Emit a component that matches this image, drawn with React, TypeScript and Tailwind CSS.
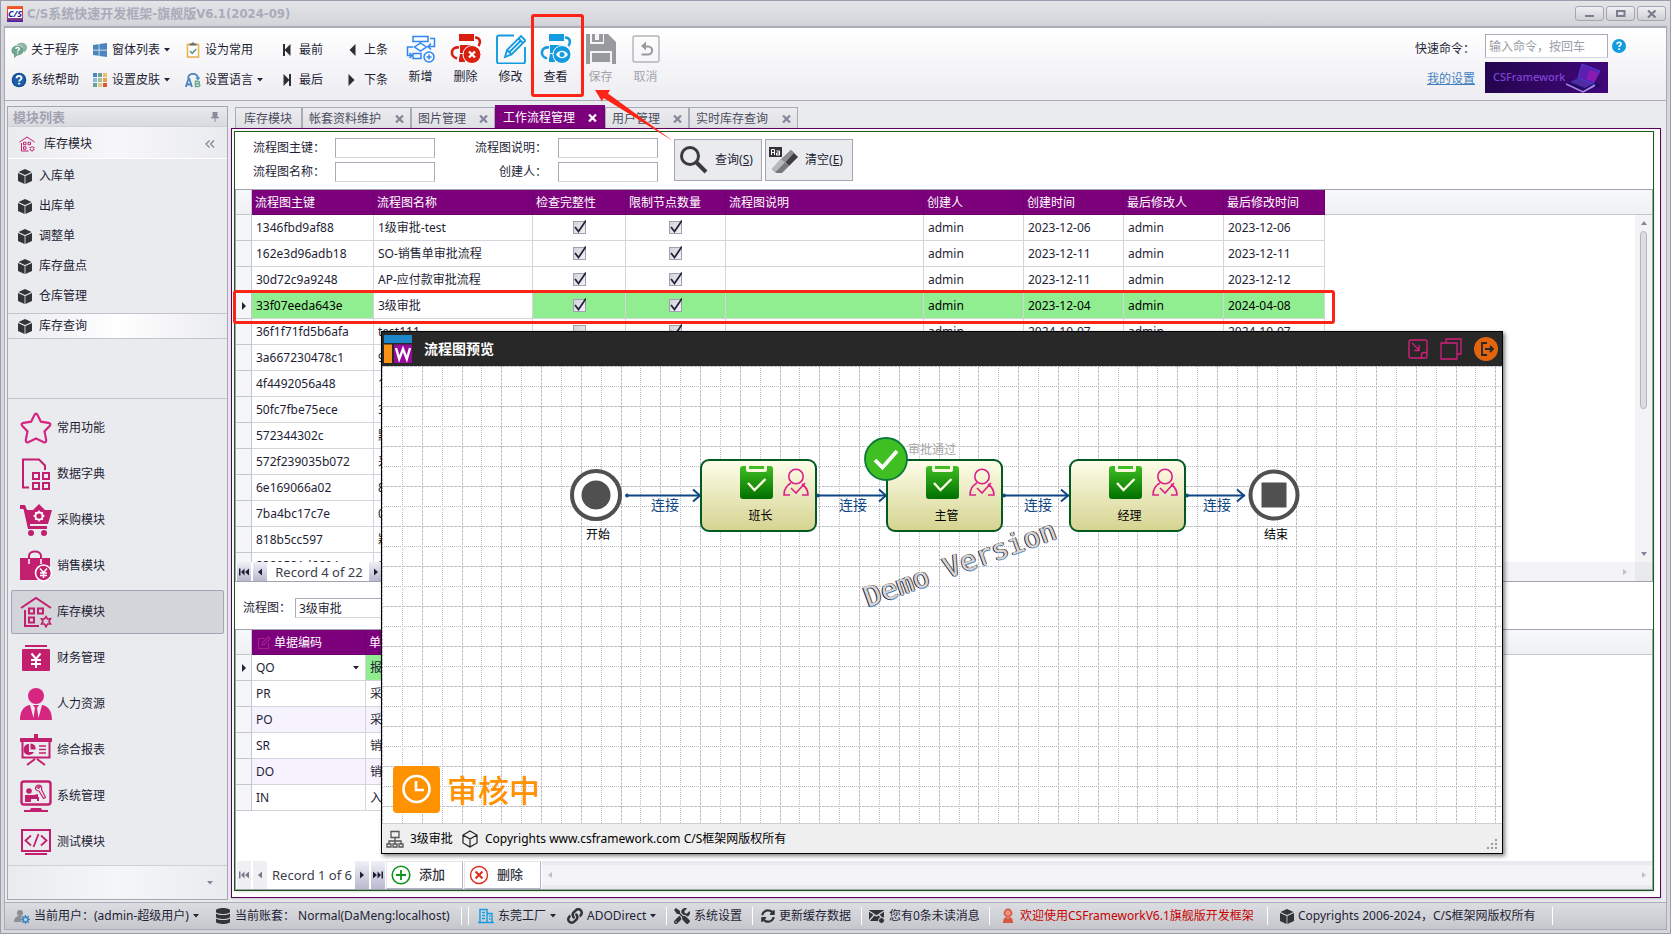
import type { ReactNode } from 'react';
import { FaWindows, FaDatabase, FaLink, FaTools, FaSyncAlt } from 'react-icons/fa';

type SvgProps = { box?: string; cls?: string; children: ReactNode };
const Svg = ({ box = '0 0 16 16', cls = 'size-4', children }: SvgProps) => (
  <svg viewBox={box} className={`shrink-0 ${cls}`} fill="none" aria-hidden="true">
    {children}
  </svg>
);

const Caret = () => (
  <Svg box="0 0 6 4" cls="h-1 w-1.5">
    <path d="M0 0h6L3 3.5z" fill="#23233a" />
  </Svg>
);

/* ---------- ribbon icons ---------- */
const AboutIcon = () => (
  <Svg>
    <path d="M6 3C8-.5 16 0 16 5.500c0 3-2 4-3 5l-1-2C13 4 9 2.500 6 3z" fill="#8cb5a2" />
    <path d="M6.500 3.500c3.500 0 6 2 6 5s-3 5-6 4.800L3 16v-3.500C1.500 11.800.5 10.500.5 8.500c0-3 2.500-5 6-5z" fill="#6fa38c" />
    <path d="M4.800 7c0-2 3.600-2 3.500 0 0 1.300-1.700 1.200-1.700 2.600M6.600 10.600v1.200" stroke="#fff" strokeWidth="1.400" />
  </Svg>
);
const HelpIcon = () => (
  <Svg>
    <circle cx="8" cy="8" r="7.300" fill="#0f4d93" />
    <circle cx="8" cy="8" r="6" fill="#1d5faa" />
    <path d="M5.600 6.300c0-3.300 5-3.100 4.900-.3 0 1.800-2.300 1.600-2.300 3.600M8.200 10.800v1.800" stroke="#fff" strokeWidth="1.900" />
  </Svg>
);
const PaletteIcon = () => (
  <Svg>
    {['#4a86bd', '#6d9e9c', '#efbf6c', '#8cbcd8', '#9cc39b', '#eba04f', '#6d9e9c', '#d6cf85', '#d9573a'].map((c, i) => (
      <rect key={i} x={1 + (i % 3) * 5} y={1 + Math.floor(i / 3) * 5} width="4" height="4" fill={c} />
    ))}
  </Svg>
);
const ClipIcon = () => (
  <Svg>
    <rect x="2.500" y="2.500" width="11" height="12.500" fill="#fff" stroke="#e9b451" strokeWidth="1.600" />
    <path d="M4.500 3.500v-2h2l.8-1h1.400l.8 1h2v2z" fill="#6d6d6d" />
    <path d="M5 9l2.200 2.300L11.200 7" stroke="#5d9c86" strokeWidth="1.800" />
  </Svg>
);
const LanguageIcon = () => (
  <Svg>
    <path d="M3 6c1-5.500 9-5.500 10 0" stroke="#4a86bd" strokeWidth="1.800" />
    <path d="M10.300 5.500h5L13 8.500z" fill="#4a86bd" />
    <path d="M.8 15l2.600-8h1l2.600 8M2 12.500h4" stroke="#4a86bd" strokeWidth="1.800" />
    <path d="M10.500 9.200h2.300c2 0 2 2.500 0 2.600h-2.300 2.700c2 0 2 2.700 0 2.700h-2.700z" stroke="#6fa88f" strokeWidth="1.600" />
  </Svg>
);
const StepIcon = ({ bar, next }: { bar?: boolean; next?: boolean }) => (
  <Svg box="0 0 8 12" cls={`h-3 w-2 ${next ? 'rotate-180' : ''}`}>
    {bar && <path d="M0 0h2v12H0z" fill="#2d2d33" />}
    <path d="M7.500 0v12L1.500 6z" fill="#2d2d33" />
  </Svg>
);

const FlowAddIcon = () => (
  <Svg box="0 0 30 30" cls="size-[30px]">
    <g stroke="#2f86f0" strokeWidth="1.500">
      <path d="M7 2.500h15v5H7zM7 19.500h8v5H7zM14.500 9l6 4-6 4-6-4z" />
      <path d="M24 4.500h4.500v8H22M25 9.500l-3 3 3 3M7 13H1.500v8.500h4M3.500 19l2.500 2.500L3.500 24" />
      <circle cx="23" cy="23" r="5" />
      <path d="M20.500 23h5M23 20.500v5" />
    </g>
  </Svg>
);
const FlowBase = ({ color, children }: { color: string; children: ReactNode }) => (
  <Svg box="0 0 32 30" cls="h-[30px] w-8">
    <path d="M9 0h15v7H9z" fill={color} />
    <path d="M10 11h14l-6 4-4 4h-4z" fill={color} />
    <path d="M25 3.500c5.500 0 6 5 3.500 8.500M9 13.500c-8-1-10 8.500-2 11" stroke={color} strokeWidth="2.600" />
    <path d="M10 20h4l1 8H9v-3z" fill={color} />
    <circle cx="22" cy="20.500" r="9" fill={color} stroke="#fff" strokeWidth="1" />
    {children}
  </Svg>
);
const FlowDeleteIcon = () => (
  <FlowBase color="#d81f10">
    <path d="M19 17.500l6 6M25 17.500l-6 6" stroke="#fff" strokeWidth="2.400" />
  </FlowBase>
);
const FlowViewIcon = () => (
  <FlowBase color="#129be0">
    <path d="M16 20.500c3-5 9-5 12 0-3 5-9 5-12 0z" fill="#fff" />
    <circle cx="22" cy="20.500" r="2.500" fill="#129be0" />
  </FlowBase>
);
const EditIcon = () => (
  <Svg box="0 0 30 30" cls="size-[30px]">
    <path d="M18 1.500H3Q1 1.500 1 3.500v24q0 2 2 2h24q2 0 2-2V13" stroke="#129be0" strokeWidth="1.900" />
    <path d="M9 23l2-7L25 2l4.500 4.500-14 14zM11 16l4.500 4.500M22.500 4.500L27 9M13 18.500L25 6.500" stroke="#129be0" strokeWidth="1.800" />
  </Svg>
);
const SaveIcon = () => (
  <Svg box="0 0 30 30" cls="size-[30px]">
    <path d="M0 0h22l8 8v22H0z" fill="#999a9d" />
    <path d="M4 0h14v10H4zM4 17h22v13H4z" fill="#f4f4f6" />
    <path d="M6 0h3v8H6zM13 0h4v8h-4zM9 6h4v2H9zM6 19h18v9H6z" fill="#999a9d" />
  </Svg>
);
const CancelIcon = () => (
  <Svg box="0 0 30 30" cls="size-[30px]">
    <rect x="2" y="2" width="26" height="26" rx="2" stroke="#b3b4b8" strokeWidth="1.400" />
    <path d="M10.500 20.500H17c5.500 0 5.500-8 0-8h-4" stroke="#999a9d" strokeWidth="2" />
    <path d="M15 7.500v9l-5-4.500z" fill="#999a9d" />
  </Svg>
);

/* ---------- sidebar icons ---------- */
const P = '#c2206f';
const WarehouseIcon = ({ cls = 'size-8' }: { cls?: string }) => (
  <Svg box="0 0 32 32" cls={cls}>
    <g stroke={P} strokeWidth="2">
      <path d="M1 12L16 2l15 10" />
      <path d="M5 14v16h14M9 12.500h5v5H9zM18 12.500h5v5h-5zM9 21.500h5v5H9z" />
      <path d="M26 20.500l1.500 2.500 3-.3-1.500 2.800 1.500 2.500h-3L26 30.800 24.500 28h-3l1.500-2.500-1.500-2.700 3 .2z" strokeWidth="1.600" />
    </g>
  </Svg>
);
const StarIcon = () => (
  <Svg box="0 0 32 32" cls="size-8">
    <path d="M14.300 3.200q1.700-3 3.400 0l3.200 6.500 7.500 1.200q3.300.8 1.200 3.200l-5.100 5.300 1.700 8.500q.3 3.400-2.900 2.200L16 26.500l-7.300 3.600q-3.200 1.200-2.900-2.200l1.700-8.500-5.100-5.300q-2.100-2.400 1.200-3.200l7.500-1.200z" stroke="#d6267f" strokeWidth="2.200" />
  </Svg>
);
const DictIcon = () => (
  <Svg box="0 0 32 32" cls="size-8">
    <path d="M9 29.500H3v-28h16l6 6V12M13 15h6v6h-6zM23 15h6v6h-6zM13 25h6v6h-6zM23 25h6v6h-6z" stroke={P} strokeWidth="2" />
  </Svg>
);
const CartIcon = () => (
  <Svg box="0 0 32 32" cls="size-8">
    <path d="M0 1h5l2 5h6l6-6 6 6h7l-4 14H10v2h17v3H8L3.500 5H0z" fill={P} />
    <circle cx="11" cy="29" r="3" fill={P} />
    <circle cx="24" cy="29" r="3" fill={P} />
    <circle cx="19" cy="12" r="3.600" stroke="#fff" strokeWidth="2" />
    <path d="M19 6.500v11M13.500 12h11M15.200 8.200l7.600 7.600M22.800 8.200l-7.600 7.600" stroke="#fff" strokeWidth="1.400" />
    <circle cx="19" cy="12" r="2.600" fill={P} />
  </Svg>
);
const BagIcon = () => (
  <Svg box="0 0 32 32" cls="size-8">
    <path d="M9 10V6c0-6 12-6 12 0v4" stroke={P} strokeWidth="2" />
    <path d="M0 8h30v22H0z" fill={P} />
    <path d="M9 9v5M21 9v5" stroke="#fff" strokeWidth="1.500" />
    <circle cx="23.500" cy="23" r="8" fill={P} stroke="#fff" strokeWidth="1.600" />
    <path d="M20 18.500l3.500 4 3.500-4M23.500 22.500V28M20 23h7M20 25.500h7" stroke="#fff" strokeWidth="1.500" />
  </Svg>
);
const FinanceIcon = () => (
  <Svg box="0 0 32 32" cls="size-8">
    <path d="M5 3h22v2H5z" fill={P} />
    <rect x="2" y="7" width="28" height="22" rx="1" fill={P} />
    <path d="M11.500 11.500L16 17l4.500-5.500M16 17v9M11 18h10M11 22h10" stroke="#fff" strokeWidth="2" />
  </Svg>
);
const PersonIcon = () => (
  <Svg box="0 0 32 32" cls="size-8">
    <circle cx="16" cy="8" r="8" fill="#d6267f" />
    <path d="M0 32c0-8 3-14 10-15l3.500 13 1.500-10-2-3h6l-2 3 1.500 10L22 17c7 1 10 7 10 15z" fill="#d6267f" />
  </Svg>
);
const ReportIcon = () => (
  <Svg box="0 0 32 32" cls="size-8">
    <path d="M14 0h4v4h14v4H0V4h14z" fill={P} />
    <path d="M2.500 8v15.500h27V8M15 25l-8 6M17 25l8 6" stroke={P} strokeWidth="2" />
    <path d="M19 12h7M19 15.500h7M19 19h7" stroke={P} strokeWidth="1.500" />
    <path d="M9 10a5.500 5.500 0 1 0 5 8h-5z" fill={P} />
    <path d="M10.500 9.500a5 5 0 0 1 5 6h-5z" fill={P} />
  </Svg>
);
const SystemIcon = () => (
  <Svg box="0 0 32 32" cls="size-8">
    <rect x="1.500" y="1.500" width="29" height="23" rx="2.500" stroke={P} strokeWidth="2.400" />
    <circle cx="9" cy="11" r="2.800" fill={P} />
    <path d="M5 22v-7h9l4-1v3h-7v5zM11 17h8v4h-2v-2h-6zM11 28h10l1 2h6v2H4v-2h6z" fill={P} />
    <path d="M17 5.500c3-1.500 5.500 1 4.500 4l4 8-2 1-4.500-7.500c-3 0-4.500-2.500-3-4.500l2.500 2 1.500-1.500z" stroke={P} strokeWidth="1.200" />
  </Svg>
);
const TestIcon = () => (
  <Svg box="0 0 32 32" cls="size-8">
    <path d="M2 4h28v21H2zM5 28h22" stroke={P} strokeWidth="2" />
    <path d="M11 9.500L5.500 14.500l5.500 5M21 9.500l5.500 5-5.500 5M18.500 8l-5 13" stroke={P} strokeWidth="1.800" />
  </Svg>
);

const modules: { name: string; icon: ReactNode; active?: boolean }[] = [
  { name: '常用功能', icon: <StarIcon /> },
  { name: '数据字典', icon: <DictIcon /> },
  { name: '采购模块', icon: <CartIcon /> },
  { name: '销售模块', icon: <BagIcon /> },
  { name: '库存模块', icon: <WarehouseIcon />, active: true },
  { name: '财务管理', icon: <FinanceIcon /> },
  { name: '人力资源', icon: <PersonIcon /> },
  { name: '综合报表', icon: <ReportIcon /> },
  { name: '系统管理', icon: <SystemIcon /> },
  { name: '测试模块', icon: <TestIcon /> },
];

const CubeIcon = () => (
  <Svg box="0 0 14 15" cls="h-[15px] w-3.5">
    <path d="M7 0l6.500 3L7 6 .5 3zM0 4l6.600 3v8L0 12zM14 4L7.400 7v8l6.600-3z" fill="#333438" />
  </Svg>
);

/* ---------- title bar ---------- */
function TitleBar() {
  const btn =
    'flex h-[15px] w-[29px] items-center justify-center rounded-[3px] border border-[#a5a6b2] bg-linear-to-b from-[#f0f0f3] to-[#cfd0d6]';
  return (
    <header className="flex h-[25px] shrink-0 items-center bg-linear-to-b from-[#e4e5e9] to-[#d3d4d9] pr-1 pl-1.5">
      <span className="flex size-4 items-center justify-center bg-linear-to-b from-[#f0622d] via-[#f02020] to-[#4718a8]">
        <span className="bg-white text-[9px] leading-[9px] font-bold text-[#1a1aa0] italic">C/S</span>
      </span>
      <h1 className="ml-1 flex-1 font-['DejaVu_Sans_Condensed','Noto_Sans_CJK_SC',sans-serif] text-[13px] leading-4 font-bold text-[#a9abb9]">C/S系统快速开发框架-旗舰版V6.1(2024-09)</h1>
      <div className="flex gap-0.5">
        <button className={btn} aria-label="最小化">
          <Svg box="0 0 10 8" cls="h-2 w-2.5"><path d="M0 5h9v2H0z" fill="#7b7d8c" /></Svg>
        </button>
        <button className={btn} aria-label="最大化">
          <Svg box="0 0 10 8" cls="h-2 w-2.5"><path d="M1 1h7.500v5H1z" stroke="#7b7d8c" strokeWidth="2" /></Svg>
        </button>
        <button className={btn} aria-label="关闭">
          <Svg box="0 0 10 8" cls="h-2 w-2.5"><path d="M1 .5l7.500 7M8.500.5l-7.500 7" stroke="#7b7d8c" strokeWidth="2.200" /></Svg>
        </button>
      </div>
    </header>
  );
}

/* ---------- ribbon ---------- */
function SmallButton({ icon, text, caret }: { icon: ReactNode; text: string; caret?: boolean }) {
  return (
    <button className="flex h-[30px] items-center gap-1 text-left whitespace-nowrap">
      <span className="flex w-4 justify-center">{icon}</span>
      <span>{text}</span>
      {caret && <Caret />}
    </button>
  );
}

function LargeButton({ icon, text, disabled, marked }: { icon: ReactNode; text: string; disabled?: boolean; marked?: boolean }) {
  return (
    <button disabled={disabled} className="relative flex h-[51px] w-[45px] flex-col items-center justify-between disabled:text-[#a3a4ad]">
      {icon}
      <span className="leading-4">{text}</span>
      {marked && <span className="absolute -top-5 -left-0.5 h-[83px] w-[53px] rounded-[3px] border-3 border-[#fb2416]" />}
    </button>
  );
}

function Ribbon() {
  return (
    <nav className="mx-[3px] flex h-[75px] shrink-0 border border-t-2 border-[#a9abb8] bg-linear-to-b from-white to-[#ededf2] pt-1.5 pr-10 pl-1.5 text-xs shadow">
      <div className="w-[81px] pt-px">
        <SmallButton icon={<AboutIcon />} text="关于程序" />
        <SmallButton icon={<HelpIcon />} text="系统帮助" />
      </div>
      <div className="w-[93px] pt-px">
        <SmallButton icon={<FaWindows className="size-4 text-[#4a86bd]" />} text="窗体列表" caret />
        <SmallButton icon={<PaletteIcon />} text="设置皮肤" caret />
      </div>
      <div className="w-[94px] pt-px">
        <SmallButton icon={<ClipIcon />} text="设为常用" />
        <SmallButton icon={<LanguageIcon />} text="设置语言" caret />
      </div>
      <div className="w-[65px] pt-px">
        <SmallButton icon={<StepIcon bar />} text="最前" />
        <SmallButton icon={<StepIcon bar next />} text="最后" />
      </div>
      <div className="w-[54px] pt-px">
        <SmallButton icon={<StepIcon />} text="上条" />
        <SmallButton icon={<StepIcon next />} text="下条" />
      </div>
      <div className="flex">
        <LargeButton icon={<FlowAddIcon />} text="新增" />
        <LargeButton icon={<FlowDeleteIcon />} text="删除" />
        <LargeButton icon={<EditIcon />} text="修改" />
        <LargeButton icon={<FlowViewIcon />} text="查看" marked />
        <LargeButton icon={<SaveIcon />} text="保存" disabled />
        <LargeButton icon={<CancelIcon />} text="取消" disabled />
      </div>
      <div className="ml-auto flex gap-2.5">
        <div className="flex flex-col items-end">
          <label htmlFor="quick" className="leading-[30px]">快速命令：</label>
          <a href="#settings" className="leading-[30px] text-[#3f7fbf] underline">我的设置</a>
        </div>
        <div className="flex flex-col gap-1">
          <div className="flex items-center gap-1">
            <input id="quick" placeholder="输入命令，按回车" className="h-6 w-[123px] border border-[#a9abb8] border-b-[#d6d7dc] bg-white px-[3px] text-xs placeholder:text-[#9b9da8]" />
            <Svg cls="size-3.5">
              <circle cx="8" cy="8" r="8" fill="#129be0" />
              <path d="M5.800 6c0-3 4.500-3 4.500-.2 0 1.700-2.200 1.500-2.200 3.400M8.100 10.500v2" stroke="#fff" strokeWidth="1.900" />
            </Svg>
          </div>
          <div className="flex h-[31px] w-[123px] items-center justify-between bg-linear-to-r from-[#23054f] to-[#42087a] pl-2 text-[11px] font-medium text-[#8043d6]">
            CSFramework
            <Svg box="0 0 42 31" cls="h-[31px] w-[42px]">
              <path d="M0 22l14-8 22 9-18 8z" fill="#200c66" />
              <path d="M0 22l17 8 11-6M17 30l12-7" stroke="#b58ae8" strokeWidth="1.500" />
              <path d="M4 20l8-4 15 6-8 4z" fill="#4f2aa0" />
              <path d="M16 2l18 7-7 13-15-6z" fill="#5c1fb0" stroke="#4a3fd8" />
              <path d="M24 8l9 3-5 9-8-3z" fill="#8a1bb0" />
            </Svg>
          </div>
        </div>
      </div>
    </nav>
  );
}

/* ---------- sidebar ---------- */
function Sidebar() {
  return (
    <aside className="mt-[5px] mb-[2px] ml-0.5 flex w-[221px] shrink-0 flex-col border border-[#a3a5b2] bg-[#eaebef] text-xs">
      <div className="flex h-5 shrink-0 items-center justify-between border-b border-[#cfd0d6] bg-linear-to-b from-[#e8e9ed] to-[#d9dadf] pr-2 pl-[5px]">
        <h2 className="text-[13px] leading-4 font-bold text-[#a0a2b0]">模块列表</h2>
        <Svg box="0 0 8 10" cls="h-2.5 w-2"><path d="M1.500 0h5v5H8v1.200H0V5h1.500zM3.500 6h1v4h-1z" fill="#8a8c9b" /></Svg>
      </div>
      <div className="flex h-8 shrink-0 items-center border-b border-white bg-linear-to-r from-[#eaebef] via-white/60 to-[#eaebef] pt-0.5 pr-3 pl-[11px]">
        <WarehouseIcon cls="size-4" />
        <span className="ml-[9px] flex-1">库存模块</span>
        <Svg box="0 0 10 8" cls="h-2 w-2.5"><path d="M4.500 0.500L1 4l3.500 3.500M9 .5L5.500 4 9 7.500" stroke="#83859a" strokeWidth="1.300" /></Svg>
      </div>
      <ul className="mt-0.5 h-[237px] shrink-0">
        {['入库单', '出库单', '调整单', '库存盘点', '仓库管理', '库存查询'].map((t, i) => (
          <li key={t} className="flex h-[30px] items-center">
            <a
              href={`#item${i}`}
              className={`flex h-[26px] flex-1 items-center gap-[7px] pl-2.5 ${i === 5 ? 'border-y border-[#c4c5cc] bg-linear-to-r from-[#eaebef] via-white to-[#eaebef]' : ''}`}
            >
              <CubeIcon />
              {t}
            </a>
          </li>
        ))}
      </ul>
      <ul className="border-t border-[#c4c5cc] pt-1.5">
        {modules.map((m) => (
          <li key={m.name} className="h-[46px] px-[3px] py-px">
            <button
              className={`flex h-11 w-full items-center gap-[5px] rounded-[2px] border pl-2 ${m.active ? 'border-[#a3a5b2] bg-[#d4d5da]' : 'border-transparent'}`}
            >
              {m.icon}
              {m.name}
            </button>
          </li>
        ))}
      </ul>
      <div className="mt-auto flex h-[34px] shrink-0 items-center justify-end border-t border-[#cfd0d6] bg-linear-to-r from-[#eaebef] via-[#f5f6f8] to-[#eaebef] pr-3.5">
        <Svg box="0 0 6 4" cls="h-1 w-1.5"><path d="M0 0h6L3 3.500z" fill="#83859a" /></Svg>
      </div>
    </aside>
  );
}

/* ---------- tabs ---------- */
const tabs = [
  { name: '库存模块', cls: 'w-[67px] px-2' },
  { name: '帐套资料维护', cls: 'w-[109px] px-1.5', close: true },
  { name: '图片管理', cls: 'w-[84px] px-1.5', close: true },
  { name: '工作流程管理', cls: 'w-[110px] px-2', close: true, active: true },
  { name: '用户管理', cls: 'w-[84px] px-1.5', close: true },
  { name: '实时库存查询', cls: 'w-[109px] px-1.5', close: true },
];
function Tabs() {
  return (
    <div role="tablist" className="flex h-[23px] shrink-0 items-end pl-1 text-xs">
      {tabs.map((t) => (
        <button
          key={t.name}
          role="tab"
          aria-selected={!!t.active}
          className={`flex items-center justify-between pt-0.5 whitespace-nowrap ${t.cls} ${
            t.active ? 'h-[23px] bg-[#7c007c] text-white' : 'h-[21px] border border-b-0 border-[#a9abb8] bg-linear-to-b from-[#ececf0] to-[#dfe0e4] text-[#4c4e5e]'
          }`}
        >
          {t.name}
          {t.close && (
            <Svg box="0 0 9 8" cls="h-2 w-[9px]"><path d="M1 .5l7 7M8 .5l-7 7" stroke={t.active ? '#fff' : '#83859a'} strokeWidth="2.200" /></Svg>
          )}
        </button>
      ))}
    </div>
  );
}

/* ---------- search form ---------- */
const field = 'h-5 w-[100px] border border-[#a9abb8] border-b-[#d6d7dc] bg-white';
function SearchForm() {
  const btn = 'flex h-[42px] w-[88px] items-center border border-[#a3a5b2] bg-[#eaebef] text-xs whitespace-nowrap';
  return (
    <form className="flex h-[57px] shrink-0 pt-1.5 pl-[18px] text-xs">
      <div className="flex flex-col gap-1">
        <div className="flex items-center"><label htmlFor="k1" className="w-[82px]">流程图主键：</label><input id="k1" className={field} /></div>
        <div className="flex items-center"><label htmlFor="k2" className="w-[82px]">流程图名称：</label><input id="k2" className={field} /></div>
      </div>
      <div className="ml-10 flex flex-col gap-1">
        <div className="flex items-center justify-end gap-[11px]"><label htmlFor="k3">流程图说明：</label><input id="k3" className={field} /></div>
        <div className="flex items-center justify-end gap-[11px]"><label htmlFor="k4">创建人：</label><input id="k4" className={field} /></div>
      </div>
      <div className="mt-px ml-4 flex gap-[3px]">
        <button type="button" className={`${btn} gap-1.5 pl-1`}>
          <Svg box="0 0 30 30" cls="size-[30px]">
            <circle cx="11" cy="11" r="8.500" stroke="#3a3a3c" strokeWidth="3" />
            <path d="M17.500 17.500L27 27" stroke="#3a3a3c" strokeWidth="4" />
          </Svg>
          <span>查询(<u>S</u>)</span>
        </button>
        <button type="button" className={`${btn} gap-1.5 pl-[3px]`}>
          <Svg box="0 0 30 30" cls="size-[30px]">
            <path d="M22 5l7 7-9 9-7-7z" fill="#3d3d3f" /><path d="M22 5l3 3-9 10-4-4z" fill="#8e8f91" />
            <path d="M12 14l8 7-7 7H7l-4-4z" fill="#777879" /><path d="M12 14l4 3.500L6.500 27 3 23.500z" fill="#b8b9ba" />
            <path d="M0 2h13v10H0z" fill="#343436" />
            <path d="M2.500 10V4.500h3V10M2.500 7.500h3M7.500 6h3v4h-3v-2h3" stroke="#fff" />
          </Svg>
          <span>清空(<u>E</u>)</span>
        </button>
      </div>
    </form>
  );
}

/* ---------- grids ---------- */
type Row = { id: string; name: string; full?: boolean; limit?: boolean; by?: string; at?: string; upBy?: string; upAt?: string };
const rows: Row[] = [
  { id: '1346fbd9af88', name: '1级审批-test', full: true, limit: true, by: 'admin', at: '2023-12-06', upBy: 'admin', upAt: '2023-12-06' },
  { id: '162e3d96adb18', name: 'SO-销售单审批流程', full: true, limit: true, by: 'admin', at: '2023-12-11', upBy: 'admin', upAt: '2023-12-11' },
  { id: '30d72c9a9248', name: 'AP-应付款审批流程', full: true, limit: true, by: 'admin', at: '2023-12-11', upBy: 'admin', upAt: '2023-12-12' },
  { id: '33f07eeda643e', name: '3级审批', full: true, limit: true, by: 'admin', at: '2023-12-04', upBy: 'admin', upAt: '2024-04-08' },
  { id: '36f1f71fd5b6afa', name: 'test111', full: false, limit: true, by: 'admin', at: '2024-10-07', upBy: 'admin', upAt: '2024-10-07' },
  { id: '3a667230478c1', name: '9' },
  { id: '4f4492056a48', name: '1' },
  { id: '50fc7fbe75ece', name: '3' },
  { id: '572344302c', name: '默' },
  { id: '572f239035b072', name: '采' },
  { id: '6e169066a02', name: '8' },
  { id: '7ba4bc17c7e', name: '0' },
  { id: '818b5cc597', name: '颖' },
  { id: '8380581d6604', name: '8' },
];

const Tick = ({ on, label }: { on: boolean; label: string }) => (
  <span className="relative mx-auto block size-[13px]">
    <input type="checkbox" aria-label={label} defaultChecked={on} className="block size-[13px] appearance-none border border-[#a0a1b0] bg-linear-to-br from-[#d2d3da] to-[#f3f3f6]" />
    {on && (
      <svg viewBox="0 0 13 14" className="pointer-events-none absolute -top-px left-0 h-3.5 w-[13px]" fill="none" aria-hidden="true">
        <path d="M2 7l3.500 4.500L13 .5" stroke="#23233a" strokeWidth="1.800" />
      </svg>
    )}
  </span>
);

const RowMark = () => (
  <Svg box="0 0 4 8" cls="mx-auto h-2 w-1"><path d="M0 0l4 4-4 4z" fill="#23233a" /></Svg>
);

const th = 'h-[25px] border-r border-b border-[#6a006a] bg-[#7c007c] pt-0.5 pr-1 pb-0 pl-[3px] text-left font-normal text-white whitespace-nowrap';
const thSide = 'border-r border-b border-[#c5c6d0] bg-linear-to-b from-[#f7f8f9] to-[#eff0f2]';
const td = 'h-[26px] overflow-hidden border-r border-b border-[#d4d5dc] px-1 whitespace-nowrap';

function FlowGrid() {
  return (
    <section className="flex h-[393px] shrink-0 flex-col border border-[#a0a2ae] text-xs">
      <div className="relative min-h-0 flex-1 overflow-hidden">
        <table className="w-full table-fixed border-separate border-spacing-0 leading-4">
          <colgroup>
            <col className="w-4" /><col className="w-[122px]" /><col className="w-[159px]" /><col className="w-[93px]" /><col className="w-[100px]" />
            <col className="w-[198px]" /><col className="w-[100px]" /><col className="w-[100px]" /><col className="w-[100px]" /><col className="w-[101px]" /><col />
          </colgroup>
          <thead>
            <tr>
              <th className={thSide} />
              {['流程图主键', '流程图名称', '检查完整性', '限制节点数量', '流程图说明', '创建人', '创建时间', '最后修改人', '最后修改时间'].map((h) => (
                <th key={h} className={th}>{h}</th>
              ))}
              <th className="border-b border-[#c5c6d0] bg-linear-to-b from-[#f7f8f9] to-[#eff0f2]" />
            </tr>
          </thead>
          <tbody>
            {rows.map((r, i) => {
              const sel = i === 3;
              const c = sel ? `${td} bg-[#90ee90] text-black` : td;
              return (
                <tr key={r.id}>
                  <td className="border-r border-b border-[#c5c6d0] bg-[#f5f6f8] p-0">{sel && <RowMark />}</td>
                  <td className={c}>{r.id}</td>
                  <td className={td}>{r.name}</td>
                  <td className={c}>{r.by && <Tick on={!!r.full} label={`检查完整性 ${r.id}`} />}</td>
                  <td className={c}>{r.by && <Tick on={!!r.limit} label={`限制节点数量 ${r.id}`} />}</td>
                  <td className={c} />
                  <td className={c}>{r.by}</td>
                  <td className={c}>{r.at}</td>
                  <td className={c}>{r.upBy}</td>
                  <td className={c}>{r.upAt}</td>
                  <td />
                </tr>
              );
            })}
          </tbody>
        </table>
        <div className="absolute top-[25px] right-0 bottom-0 flex w-[17px] flex-col items-center bg-[#f4f4f7] py-1.5">
          <Svg box="0 0 6 4" cls="h-1 w-1.5"><path d="M0 4h6L3 0z" fill="#83859a" /></Svg>
          <span className="mt-1.5 h-[178px] w-[7px] rounded-full border border-[#b4b5be] bg-[#dcdde2]" />
          <Svg box="0 0 6 4" cls="mt-auto h-1 w-1.5"><path d="M0 0h6L3 4z" fill="#83859a" /></Svg>
        </div>
      </div>
      <div className="flex h-[19px] shrink-0 bg-[#f4f4f7]">
        <Pager text="Record 4 of 22" cls="w-[98px] pl-0.5" />
        <span className="ml-auto flex items-center pr-2"><Svg box="0 0 4 6" cls="h-1.5 w-1"><path d="M0 0l4 3-4 3z" fill="#c0c1c8" /></Svg></span>
        <span className="w-[17px] bg-[#e9eaee]" />
      </div>
    </section>
  );
}

function PagerButton({ dir, bar, off }: { dir: 'prev' | 'next'; bar?: boolean; off?: boolean }) {
  return (
    <button
      disabled={off}
      aria-label={dir === 'prev' ? (bar ? '首条' : '上一条') : bar ? '末条' : '下一条'}
      className={`flex w-3.5 items-center justify-center ${off ? 'bg-[#f0f0f2] text-[#77788a]' : 'bg-linear-to-b from-[#f0f0f6] to-[#b9b9d0] text-[#1e1e35]'}`}
    >
      <Svg box="0 0 10 8" cls={`h-2 w-2.5 ${dir === 'next' ? 'rotate-180' : ''}`}>
        {bar ? <path d="M0 .5h1.500v7H0zM5.500.5v7L2 4zM10 .5v7L6 4z" fill="currentColor" /> : <path d="M7 .5v7L3 4z" fill="currentColor" />}
      </Svg>
    </button>
  );
}

function Pager({ text, cls, off }: { text: string; cls: string; off?: boolean }) {
  return (
    <div className="flex gap-0.5 bg-white pl-px text-[13px] leading-4 text-[#3c3d4a]">
      <PagerButton dir="prev" bar off={off} />
      <PagerButton dir="prev" off={off} />
      <span className={`flex items-center justify-center whitespace-nowrap ${cls}`}>{text}</span>
      <PagerButton dir="next" />
      <PagerButton dir="next" bar />
    </div>
  );
}

const docs = [['QO', '报'], ['PR', '采'], ['PO', '采'], ['SR', '销'], ['DO', '销'], ['IN', '入']];
function DocGrid() {
  const action = 'flex w-[77px] items-center gap-2 border border-[#b4b4c8] border-t-[#e6e6ee] border-l-[#e6e6ee] bg-white pl-1 text-[13px] font-medium text-[#333440]';
  return (
    <section className="flex min-h-0 flex-1 flex-col border border-[#a0a2ae] text-xs">
      <table className="w-full table-fixed border-separate border-spacing-0 leading-4">
        <colgroup><col className="w-4" /><col className="w-[114px]" /><col className="w-[120px]" /><col /></colgroup>
        <thead>
          <tr>
            <th className={thSide} />
            <th className={th}>
              <span className="flex items-center gap-[3px] pl-0.5">
                <Svg box="0 0 14 14" cls="size-3.5"><path d="M8 2.500H1.500v10h10V7M5 9l.5-2.500L11.500.8l1.700 1.700L7.500 8.500z" stroke="#a3208c" strokeWidth="1.200" /></Svg>
                单据编码
              </span>
            </th>
            <th className={th}>单</th>
            <th className="border-b border-[#c5c6d0] bg-linear-to-b from-[#f7f8f9] to-[#eff0f2]" />
          </tr>
        </thead>
        <tbody>
          {docs.map(([code, name], i) => {
            const tone = i === 2 || i === 4 ? `${td} bg-[#f6f3fe]` : td;
            return (
              <tr key={code}>
                <td className="border-r border-b border-[#c5c6d0] bg-[#f5f6f8] p-0">{i === 0 && <RowMark />}</td>
                <td className={tone}>
                  {i === 0 ? <span className="flex items-center justify-between pr-0.5">{code}<Caret /></span> : code}
                </td>
                <td className={i === 0 ? `${td} bg-[#90ee90]` : tone}>{name}</td>
                <td />
              </tr>
            );
          })}
        </tbody>
      </table>
      <div className="mt-auto flex h-7 shrink-0 gap-px bg-white">
        <Pager text="Record 1 of 6" cls="w-[84px] pl-0.5" off />
        <button className={action}>
          <Svg box="0 0 20 20" cls="size-5"><circle cx="10" cy="10" r="8.800" stroke="#0f941b" strokeWidth="1.600" /><path d="M5 10h10M10 5v10" stroke="#0f941b" strokeWidth="1.800" /></Svg>
          <span>添加</span>
        </button>
        <button className={action}>
          <Svg box="0 0 20 20" cls="size-5"><circle cx="10" cy="10" r="8.500" stroke="#dc2a1c" strokeWidth="1.400" /><path d="M6.500 6.500l7 7M13.500 6.500l-7 7" stroke="#dc2a1c" strokeWidth="2" /></Svg>
          <span>删除</span>
        </button>
        <div className="flex flex-1 items-center justify-between border-y-4 border-[#e9eaee] bg-[#f4f4f7] px-1.5">
          <Svg box="0 0 4 6" cls="h-1.5 w-1"><path d="M4 0L0 3l4 3z" fill="#c0c1c8" /></Svg>
          <Svg box="0 0 4 6" cls="h-1.5 w-1"><path d="M0 0l4 3-4 3z" fill="#c0c1c8" /></Svg>
        </div>
      </div>
    </section>
  );
}

/* ---------- flow preview window ---------- */
const CANVAS_W = 1120;
const CANVAS_H = 458;
const GRID_X = 19.88;
const edges = [[245, 319], [436, 505], [622, 687], [805, 863]];

function GridLines() {
  const cols = Array.from({ length: 57 }, (_, i) => Math.round(i * GRID_X));
  const lines = Array.from({ length: 23 }, (_, i) => i * 20);
  return (
    <g stroke="#bcbdc4" shapeRendering="crispEdges">
      {cols.map((x, i) => <path key={x} d={`M${x + 0.5} 0V${CANVAS_H}`} strokeDasharray={i % 2 ? '1 1' : '3 1'} />)}
      {lines.map((y, i) => <path key={y} d={`M0 ${y + 0.5}H${CANVAS_W}`} strokeDasharray={i % 2 ? '1 1' : '3 1'} />)}
    </g>
  );
}

function StepNode({ text, cls }: { text: string; cls: string }) {
  return (
    <div className={`absolute top-[93px] flex h-[73px] w-[117px] flex-col rounded-[9px] border-2 border-[#005a22] bg-linear-to-b from-[#fdfdea] to-[#d6d490] pt-[5px] ${cls}`}>
      <div className="flex gap-2.5 pl-[38px]">
        <Svg box="0 0 33 33" cls="size-[33px]">
          <defs>
            <linearGradient id="clip" x1="0" y1="0" x2="0" y2="1"><stop stopColor="#3fbd22" /><stop offset="1" stopColor="#007000" /></linearGradient>
          </defs>
          <path d="M0 3q0-3 3-3h3v4q0 2 2 2h17q2 0 2-2V0h3q3 0 3 3v27q0 3-3 3H3q-3 0-3-3z" fill="url(#clip)" />
          <path d="M9 0h15v3H9z" fill="#3fbd22" />
          <path d="M8 17l6.500 7L25.500 13" stroke="#fbfbe0" strokeWidth="2.400" />
        </Svg>
        <Svg box="0 0 26 28" cls="mt-0.5 h-7 w-[26px]">
          <g stroke="#dc2088" strokeWidth="1.600">
            <circle cx="13" cy="8.500" r="7.200" />
            <path d="M8 15c-4 2-7 6-7 12h6M19 16c4 3 6 7 6 11h-6M8 20l5 5 9-10" />
          </g>
        </Svg>
      </div>
      <span className="mt-[9px] pl-1 text-center text-xs leading-4 text-black">{text}</span>
    </div>
  );
}

function Canvas() {
  const cap = 'absolute text-xs leading-4 text-black';
  return (
    <div className="relative min-h-0 flex-1 overflow-hidden bg-white">
      <svg width={CANVAS_W} height={CANVAS_H} className="absolute top-0 left-0" fill="none" aria-hidden="true">
        <GridLines />
        <circle cx="214" cy="129" r="24" fill="#fff" stroke="#505050" strokeWidth="4" />
        <circle cx="214" cy="129" r="14.500" fill="#505050" />
        <circle cx="892" cy="129" r="23.500" fill="#fff" stroke="#505050" strokeWidth="4" />
        <path d="M879.500 116.500h25v25h-25z" fill="#505050" />
        <g stroke="#0f4785">
          {edges.map(([a, b]) => (
            <g key={a}>
              <path d={`M${a} 129.500H${b}`} strokeWidth="2" />
              <path d={`M${b - 8} 123.500l7 6-7 6`} strokeWidth="2" />
              <circle cx={a} cy="129.500" r="1.500" fill="#0f4785" />
            </g>
          ))}
        </g>
      </svg>
      <StepNode text="班长" cls="left-[318px]" />
      <StepNode text="主管" cls="left-[504px]" />
      <StepNode text="经理" cls="left-[687px]" />
      <span className={`${cap} top-[161px] left-[204px]`}>开始</span>
      <span className={`${cap} top-[161px] left-[882px]`}>结束</span>
      {['left-[269px]', 'left-[457px]', 'left-[642px]', 'left-[821px]'].map((l) => (
        <span key={l} className={`absolute top-[129px] text-sm leading-5 text-[#0f4785] ${l}`}>连接</span>
      ))}
      <Svg box="0 0 44 44" cls="absolute top-[71px] left-[482px] size-11">
        <circle cx="22" cy="22" r="21" fill="#3fbf22" stroke="#0a7a3c" strokeWidth="1.800" />
        <path d="M11 23l7.500 7.500L33 14" stroke="#fff" strokeWidth="3.800" />
      </Svg>
      <span className="absolute top-[76px] left-[526px] text-xs leading-4 text-[#a6a6a6]">审批通过</span>
      <span className="absolute top-[218px] left-[488px] origin-bottom-left -rotate-20 font-['DejaVu_Sans_Mono',monospace] text-[28px] leading-none whitespace-nowrap text-[#d6d6d6] [text-shadow:-1px_0_#15244f,1px_0_#6b4a2e,0_1px_#5f9fd6]">
        Demo Version
      </span>
      <div className="absolute bottom-2.5 left-[11px] flex items-center gap-[7px] text-[31px] leading-10 font-medium text-[#ff9200]">
        <Svg box="0 0 47 47" cls="size-[47px]">
          <rect width="47" height="47" rx="4" fill="#ff9200" />
          <circle cx="23.500" cy="23" r="13" stroke="#fff" strokeWidth="2.600" />
          <path d="M23 15v9h8" stroke="#fff" strokeWidth="2.600" />
        </Svg>
        审核中
      </div>
    </div>
  );
}

function PreviewWindow() {
  return (
    <section role="dialog" aria-label="流程图预览" className="absolute top-[330px] left-[380px] flex h-[523px] w-[1122px] flex-col border border-black shadow-[2px_2px_4px_rgba(0,0,0,0.5)]">
      <header className="flex h-[34px] shrink-0 items-center bg-[#282828] pr-1 pl-0.5">
        <Svg box="0 0 28 28" cls="size-7">
          <path d="M0 0h28v8H0z" fill="#1c86c8" /><path d="M0 9.500h8V28H0z" fill="#fb9218" /><path d="M10 9.500h18V28H10z" fill="#980a9c" />
          <path d="M12 13l3.200 11L19 14l3.800 10L26 13" stroke="#fff" strokeWidth="2.400" />
        </Svg>
        <h2 className="ml-3 flex-1 text-sm font-bold text-white">流程图预览</h2>
        <div className="flex items-center gap-3">
          <button aria-label="缩小">
            <Svg box="0 0 20 20" cls="size-5"><g stroke="#d31f7c" strokeWidth="1.400"><path d="M13.500 19H3q-2 0-2-2V3q0-2 2-2h14q2 0 2 2v14q0 2-2 2h-3.500v-3q0-2.500 2.500-2.500h3M4 4l7 7M11 6v5.500H6" /></g></Svg>
          </button>
          <button aria-label="还原">
            <Svg box="0 0 22 22" cls="size-[22px]"><path d="M1 5h16v16H1zM6 5V1h15v15h-4" stroke="#d31f7c" strokeWidth="1.300" /></Svg>
          </button>
          <button aria-label="退出">
            <Svg box="0 0 24 24" cls="size-6"><circle cx="12" cy="12" r="12" fill="#e2650e" /><path d="M13 6H8v12h5M11 12h8M16 9l3 3-3 3" stroke="#282828" strokeWidth="1.800" /></Svg>
          </button>
        </div>
      </header>
      <Canvas />
      <footer className="flex h-[30px] shrink-0 items-center border-t border-[#d0d0d0] bg-[#efefef] pr-1 pl-1 text-xs text-black">
        <Svg box="0 0 18 18" cls="size-[18px]"><path d="M5 1.500h8v6H5zM9 8v3M3 14v-3h12v3M9 11v3M1 14h4v3H1zM7 14h4v3H7zM13 14h4v3h-4z" stroke="#555" strokeWidth="1.300" /></Svg>
        <span className="ml-1.5 w-[52px]">3级审批</span>
        <Svg box="0 0 16 18" cls="h-[18px] w-4"><path d="M8 1l7 4v8l-7 4-7-4V5zM1 5l7 4 7-4M8 9v8" stroke="#222" strokeWidth="1.200" /></Svg>
        <span className="ml-[7px] flex-1">Copyrights www.csframework.com C/S框架网版权所有</span>
        <Svg box="0 0 11 11" cls="mt-3 size-[11px]"><path d="M8 0h2v2H8zM4 4h2v2H4zM8 4h2v2H8zM0 8h2v2H0zM4 8h2v2H4zM8 8h2v2H8z" fill="#9a9a9a" /></Svg>
      </footer>
    </section>
  );
}

/* ---------- status bar ---------- */
const Divider = ({ cls = '' }: { cls?: string }) => <span className={`h-[18px] w-px shrink-0 border-r border-white bg-[#a9abb8] ${cls}`} />;

function StatusItem({ icon, text, cls, caret }: { icon: ReactNode; text: string; cls: string; caret?: boolean }) {
  return (
    <span className={`flex shrink-0 items-center gap-1 whitespace-nowrap ${cls}`}>
      {icon}
      <span>{text}</span>
      {caret && <Caret />}
    </span>
  );
}

function StatusBar() {
  return (
    <footer className="mx-[3px] mb-[3px] flex h-7 shrink-0 items-center border border-[#a9abb8] bg-linear-to-b from-[#dcdde1] to-[#c6c7cd] pl-[9px] text-xs">
      <StatusItem cls="w-[201px]" caret text="当前用户：(admin-超级用户)" icon={
        <Svg><circle cx="6" cy="5" r="3" fill="#8d8e92" /><path d="M0 14c0-5 3-6 6-6 2 0 4 0 5 2v4z" fill="#8d8e92" /><circle cx="11.500" cy="11.500" r="4.600" fill="#d2d3d8" /><circle cx="11.500" cy="11.500" r="2.400" stroke="#3c85c4" strokeWidth="1.600" /><path d="M11.500 7v2M11.500 14v2M7 11.500h2M14 11.500h2M8.300 8.300l1.400 1.400M13.300 13.300l1.400 1.400M14.700 8.300l-1.400 1.400M9.700 13.300l-1.400 1.400" stroke="#3c85c4" strokeWidth="1.400" /></Svg>
      } />
      <StatusItem cls="w-[246px]" text="当前账套： Normal(DaMeng:localhost)" icon={<FaDatabase className="size-4 text-[#333438]" />} />
      <Divider cls="mr-1.5" /><Divider cls="mr-[9px]" />
      <StatusItem cls="w-[89px]" caret text="东莞工厂" icon={
        <Svg><path d="M2 1.500h7v13H2zM9 5.500h5v9H9M4 4.500h3M4 7.500h3M4 10.500h3M11 8h1.500M11 11h1.500M0 14.500h16" stroke="#129be0" strokeWidth="1.400" /></Svg>
      } />
      <StatusItem cls="w-[99px]" caret text="ADODirect" icon={<FaLink className="size-4 text-[#333438]" />} />
      <Divider cls="mr-[7px]" />
      <StatusItem cls="w-[78px]" text="系统设置" icon={<FaTools className="size-4 text-[#333438]" />} />
      <Divider cls="mr-2" />
      <StatusItem cls="w-[100px]" text="更新缓存数据" icon={<FaSyncAlt className="size-3.5 text-[#333438]" />} />
      <Divider cls="mr-[7px]" />
      <StatusItem cls="w-[120px]" text="您有0条未读消息" icon={
        <Svg><path d="M0 2h15v7l-4 4H0z" fill="#333438" /><path d="M0 3l7.500 5L15 3M0 13l5-6M10 7l3 3" stroke="#d6d7dc" strokeWidth="1.200" /><circle cx="12.500" cy="12.500" r="3" fill="#333438" stroke="#d6d7dc" /></Svg>
      } />
      <Divider cls="mr-2.5" />
      <div className="w-[267px] text-[#c80000]">
        <StatusItem cls="" text="欢迎使用CSFrameworkV6.1旗舰版开发框架" icon={
          <Svg><circle cx="8" cy="5" r="3.600" fill="#e9967e" stroke="#d9573a" strokeWidth="1.600" /><path d="M3 15q0-5 3-6l2 1.500L10 9q3 1 3 6z" fill="#d9573a" /></Svg>
        } />
      </div>
      <Divider cls="mr-3" />
      <StatusItem cls="w-[272px]" text="Copyrights 2006-2024，C/S框架网版权所有" icon={<CubeIcon />} />
      <Divider />
    </footer>
  );
}

export default function App() {
  return (
    <div className="relative flex h-screen flex-col overflow-hidden border border-[#9b9cac] bg-[#d7d8dd] font-['Noto_Sans','Noto_Sans_CJK_SC',sans-serif] text-xs text-[#1e1e35]">
      <TitleBar />
      <Ribbon />
      <div className="mx-[3px] flex min-h-0 flex-1 border-x border-[#a9abb8] bg-[#eaebef]">
        <Sidebar />
        <main className="mt-1 mr-[5px] mb-1 ml-[3px] flex min-w-0 flex-1 flex-col">
          <Tabs />
          <div className="flex min-h-0 flex-1 flex-col border border-[#5c005c] bg-white pt-0.5 pr-1.5 pb-1.5 pl-0.5 shadow">
            <div className="flex min-h-0 flex-1 flex-col border border-[#1a5a1a] shadow-sm">
              <SearchForm />
              <FlowGrid />
              <div className="flex h-[47px] shrink-0 items-center pt-1 pl-2">
                <label htmlFor="flow" className="w-[52px]">流程图：</label>
                <input id="flow" defaultValue="3级审批" className="h-5 w-[300px] border border-[#a9abb8] border-b-[#d6d7dc] px-[3px] text-xs" />
              </div>
              <DocGrid />
            </div>
          </div>
        </main>
      </div>
      <StatusBar />
      <PreviewWindow />
      <div className="pointer-events-none absolute top-[289px] left-[232px] h-[34px] w-[1102px] rounded-[3px] border-3 border-[#fb2416]" />
      <svg width="80" height="54" viewBox="0 0 80 54" className="pointer-events-none absolute top-[87px] left-[593px]" aria-hidden="true">
        <path d="M1 2l15 0-2 3.500L79 53 9.500 10 8 13.500z" fill="#fb2416" />
      </svg>
    </div>
  );
}
